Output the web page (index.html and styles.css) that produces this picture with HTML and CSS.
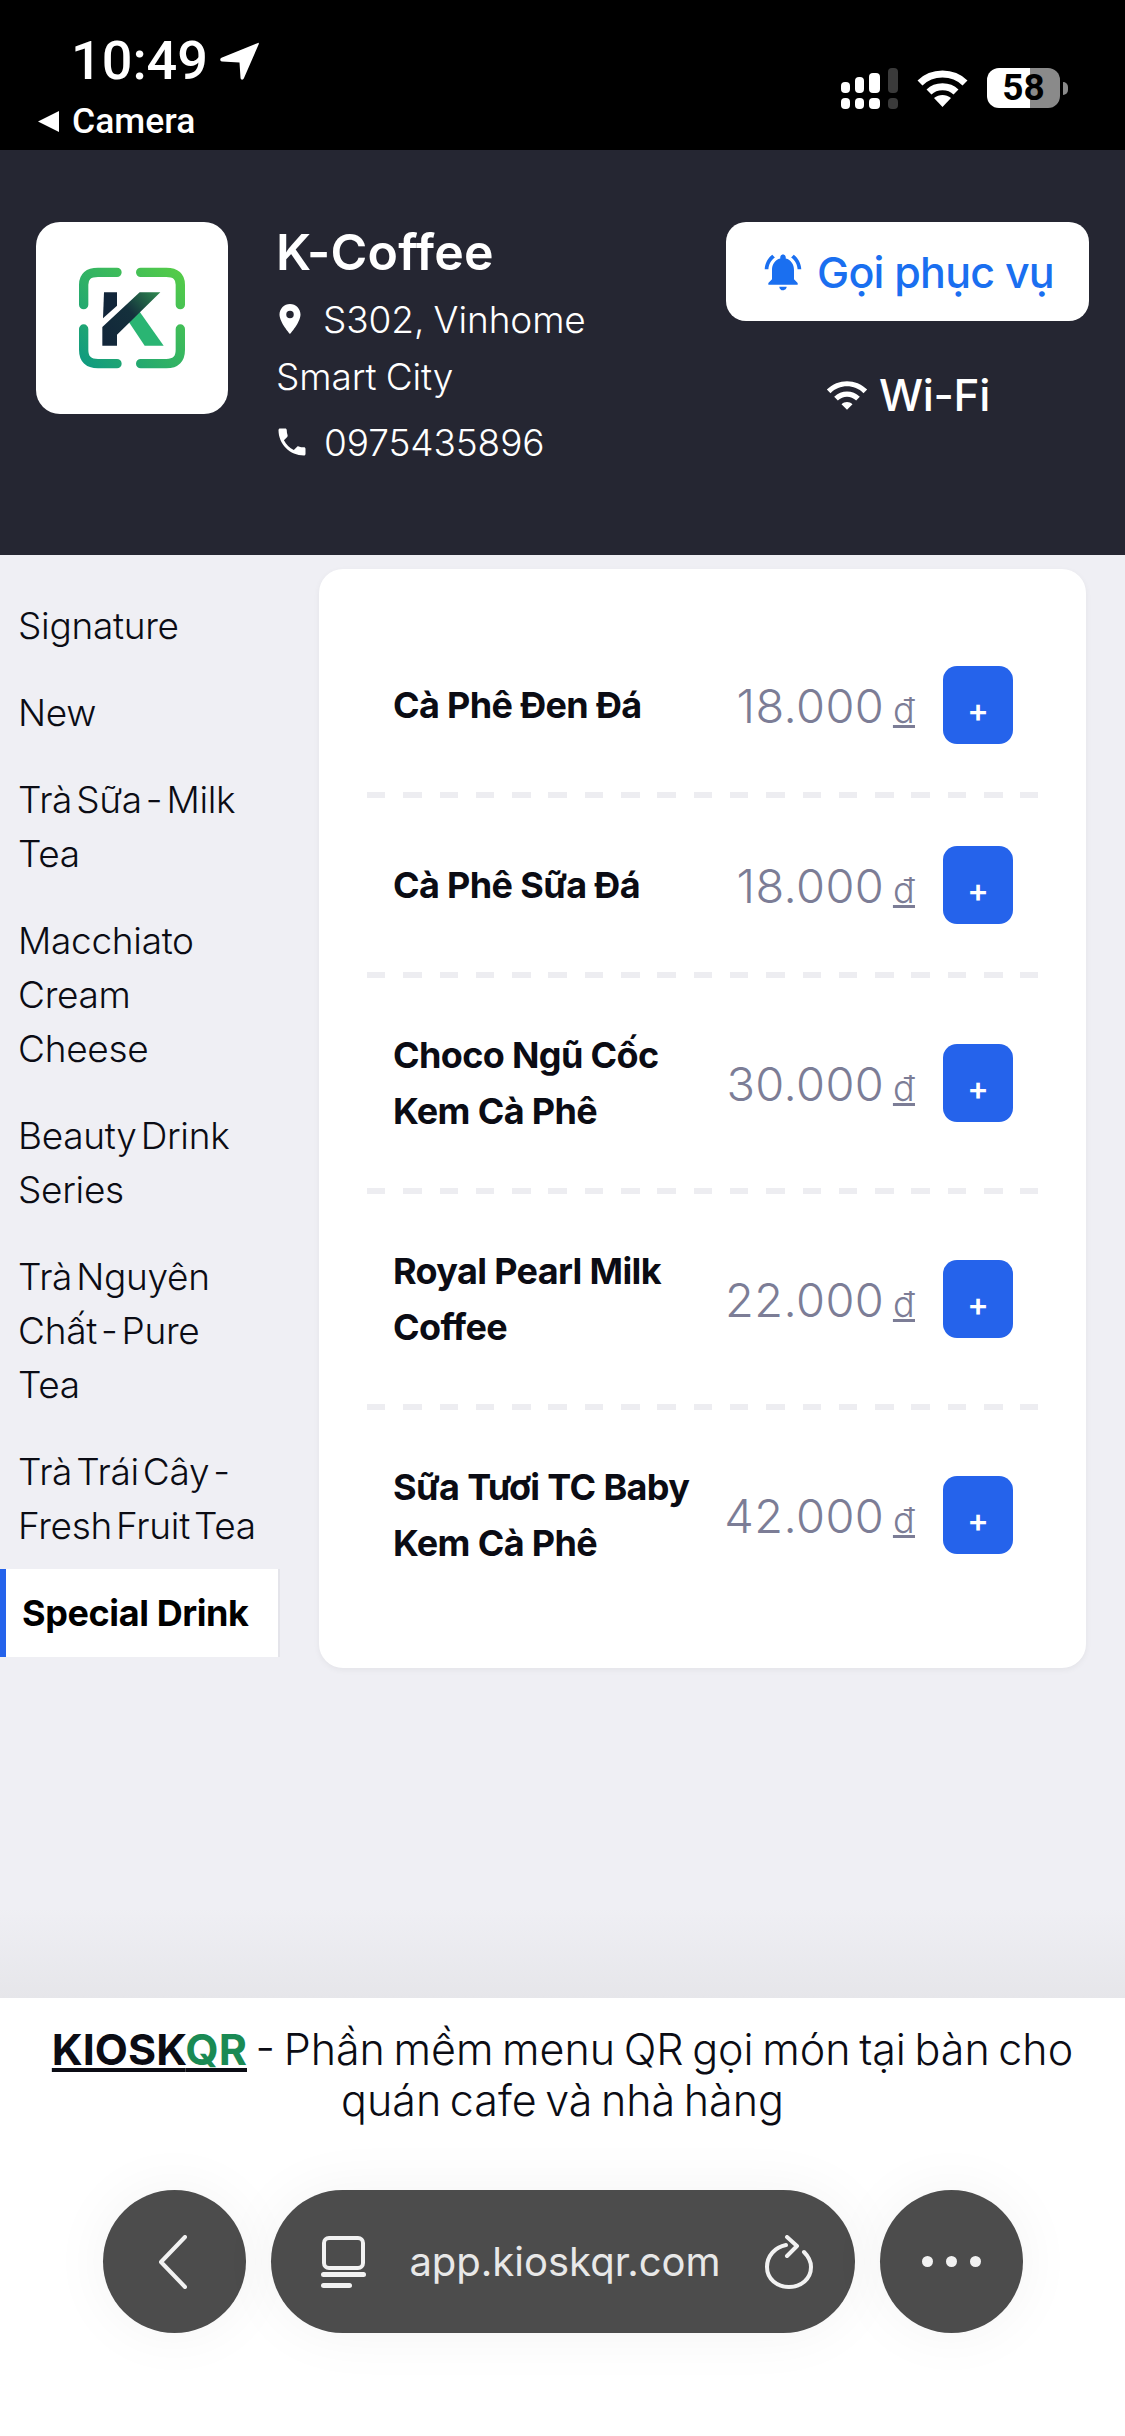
FILE: index.html
```html
<!DOCTYPE html>
<html lang="vi">
<head>
<meta charset="utf-8">
<title>K-Coffee</title>
<link rel="stylesheet" href="styles.css">
</head>
<body>
<div class="page">
  <div class="status">
    <div class="status-left">
      <div class="time-row">
        <span class="time">10:49</span>
        <svg class="loc" viewBox="0 0 39 38"><path d="M38 1 C38.5 .5 39 1 38.8 2 L24 36 C23 38.5 20.5 38 20.5 35.5 L19.5 20.5 L2 19.5 C-.3 19 -.3 16.8 1.5 15.8 Z" fill="#fff"/></svg>
      </div>
      <div class="camera-row">
        <svg class="back-tri" viewBox="0 0 21 21"><path d="M21 0V21L0 10.5Z" fill="#fff"/></svg>
        <span class="camera">Camera</span>
      </div>
    </div>
    <div class="status-right">
      <svg class="signal" viewBox="0 0 58 41">
        <g fill="#fff">
          <rect x="1" y="14" width="9" height="11" rx="4"/><rect x="1" y="30" width="9" height="11" rx="4"/>
          <rect x="15" y="9" width="9" height="16" rx="4"/><rect x="15" y="30" width="9" height="11" rx="4"/>
          <rect x="29" y="5" width="11" height="20" rx="4"/><rect x="29" y="30" width="11" height="11" rx="4"/>
        </g>
        <g fill="#3a3a3a">
          <rect x="48" y="0" width="10" height="25" rx="4"/><rect x="48" y="30" width="10" height="11" rx="4"/>
        </g>
      </svg>
      <svg class="wifi-status" viewBox="0 0 51 37"><g fill="none" stroke="#fff" stroke-width="7"><path d="M3 13C15 1 36 1 48 13"/><path d="M12 22C19 15 32 15 39 22"/></g><path d="M17 28C22 24 29 24 34 28L25.500 37Z" fill="#fff"/></svg>
      <div class="battery"><span class="battery-num">58</span></div>
      <span class="battery-nub"></span>
    </div>
  </div>

  <header class="head">
    <div class="logo-card">
      <svg class="logo" viewBox="-8 10 450 450">
        <defs>
          <linearGradient id="lg" x1="360" y1="90" x2="70" y2="380" gradientUnits="userSpaceOnUse"><stop offset="0" stop-color="#55cc48"/><stop offset="1" stop-color="#0f9a80"/></linearGradient>
          <linearGradient id="kg" x1="300" y1="158" x2="130" y2="318" gradientUnits="userSpaceOnUse"><stop offset="0" stop-color="#2f8a50"/><stop offset=".45" stop-color="#14303c"/><stop offset="1" stop-color="#12263a"/></linearGradient>
        </defs>
        <g fill="none" stroke="url(#lg)" stroke-width="28" stroke-linecap="round">
          <path d="M72 195V135Q72 98 115 98H172"/>
          <path d="M243 98H320Q362 98 362 135V195"/>
          <path d="M72 268V330Q72 372 115 372H172"/>
          <path d="M243 372H320Q362 372 362 330V268"/>
        </g>
        <path d="M208 248L240 216L312 318H255Z" fill="#2ab573"/>
        <path d="M133 158H172V198L130 236Z" fill="#12263a"/>
        <path d="M240 158H302L172 285V318H128V262Z" fill="url(#kg)"/>
      </svg>
    </div>
    <div class="shop">
      <h1 class="shop-name">K-Coffee</h1>
      <p class="shop-line"><svg class="pin" viewBox="0 0 24 24"><path d="M12 2C8.130 2 5 5.130 5 9c0 5.250 7 13 7 13s7-7.750 7-13c0-3.870-3.130-7-7-7zm0 9.500a2.500 2.500 0 0 1 0-5 2.500 2.500 0 0 1 0 5z" fill="#fff"/></svg>S302, Vinhome Smart City</p>
      <p class="shop-line"><svg class="phone" viewBox="0 0 24 24"><path d="M6.620 10.790c1.440 2.830 3.760 5.140 6.590 6.590l2.200-2.200c.27-.27.67-.36 1.020-.24 1.120.37 2.330.57 3.570.57.55 0 1 .45 1 1V20c0 .55-.45 1-1 1-9.390 0-17-7.610-17-17 0-.55.45-1 1-1h3.500c.55 0 1 .45 1 1 0 1.250.2 2.450.57 3.570.11.35.03.74-.25 1.020l-2.200 2.200z" fill="#fff"/></svg>0975435896</p>
    </div>
    <div class="actions">
      <button class="call"><svg class="bell" viewBox="0 0 24 24"><path d="M7.580 4.080 6.150 2.650C3.750 4.480 2.170 7.300 2.030 10.500h2c.15-2.650 1.510-4.970 3.550-6.420zm12.390 6.420h2c-.15-3.200-1.730-6.020-4.120-7.850l-1.420 1.430c2.020 1.450 3.390 3.770 3.540 6.420zM18 11c0-3.070-1.640-5.640-4.500-6.320V4c0-.83-.67-1.500-1.500-1.500s-1.500.67-1.500 1.500v.68C7.630 5.360 6 7.920 6 11v5l-2 2v1h16v-1l-2-2v-5zm-6 11c.14 0 .27-.01.4-.04.65-.14 1.180-.58 1.440-1.180.1-.24.15-.5.15-.78h-4c.01 1.100.9 2 2.010 2z" fill="#1a6ff0"/></svg>Gọi phục vụ</button>
      <div class="wifi"><svg class="wifi-ico" viewBox="0 0 24 24"><path d="M1 9l2 2c4.970-4.970 13.030-4.970 18 0l2-2C16.930 2.930 7.080 2.930 1 9zm8 8l3 3 3-3c-1.650-1.660-4.340-1.660-6 0zm-4-4l2 2c2.760-2.760 7.240-2.760 10 0l2-2C15.140 9.140 8.870 9.140 5 13z" fill="#fff"/></svg>Wi-Fi</div>
    </div>
  </header>

  <main class="main">
    <nav class="side">
      <a class="cat">Signature</a>
      <a class="cat">New</a>
      <a class="cat">Trà Sữa - Milk Tea</a>
      <a class="cat">Macchiato Cream Cheese</a>
      <a class="cat">Beauty Drink Series</a>
      <a class="cat">Trà Nguyên Chất - Pure Tea</a>
      <a class="cat">Trà Trái Cây - Fresh Fruit Tea</a>
      <a class="cat active">Special Drink</a>
    </nav>
    <section class="card">
      <div class="row"><div class="name">Cà Phê Đen Đá</div><div class="price">18.000 <u>đ</u></div><button class="add">+</button></div>
      <div class="divider"></div>
      <div class="row"><div class="name">Cà Phê Sữa Đá</div><div class="price">18.000 <u>đ</u></div><button class="add">+</button></div>
      <div class="divider"></div>
      <div class="row"><div class="name">Choco Ngũ Cốc Kem Cà Phê</div><div class="price">30.000 <u>đ</u></div><button class="add">+</button></div>
      <div class="divider"></div>
      <div class="row"><div class="name">Royal Pearl Milk Coffee</div><div class="price">22.000 <u>đ</u></div><button class="add">+</button></div>
      <div class="divider"></div>
      <div class="row"><div class="name">Sữa Tươi TC Baby Kem Cà Phê</div><div class="price">42.000 <u>đ</u></div><button class="add">+</button></div>
    </section>
  </main>

  <footer class="foot">
    <p class="promo"><a class="brand">KIOSK<span class="qr">QR</span></a> - Phần mềm menu QR gọi món tại bàn cho quán cafe và nhà hàng</p>
    <div class="browser">
      <div class="round"><svg class="chev" viewBox="0 0 29 54"><path d="M27 2L3 27L27 52" fill="none" stroke="#f2f2f2" stroke-width="4" stroke-linecap="round" stroke-linejoin="round"/></svg></div>
      <div class="url">
        <svg class="tabs" viewBox="0 0 45 52"><rect x="3" y="2" width="39" height="30" rx="5" fill="none" stroke="#f2f2f2" stroke-width="4"/><rect x="0" y="36" width="45" height="5" rx="2.500" fill="#f2f2f2"/><rect x="0" y="47" width="31" height="5" rx="2.500" fill="#f2f2f2"/></svg>
        <span class="url-text">app.kioskqr.com</span>
        <svg class="reload" viewBox="0 0 48 54"><path d="M21 10C10 12 2 21 2 32C2 44 12 52 24 52C36 52 46 44 46 32C46 26 43 21 39 17" fill="none" stroke="#f2f2f2" stroke-width="4" stroke-linecap="round"/><path d="M22 2L32 11L22 21" fill="none" stroke="#f2f2f2" stroke-width="4" stroke-linecap="round" stroke-linejoin="round"/></svg>
      </div>
      <div class="round dots"><i></i><i></i><i></i></div>
    </div>
  </footer>
</div>
</body>
</html>
```

FILE: styles.css
```css
* { box-sizing: border-box; }
html, body { margin: 0; padding: 0; }
body { font-family: Inter, "Noto Sans", sans-serif; background: #fff; }
p, h1 { margin: 0; }
button { font-family: inherit; border: 0; }

.page { width: 1125px; height: 2436px; display: flex; flex-direction: column; overflow: hidden; }

/* status bar */
.status { height: 150px; flex: none; background: #000; color: #fff; display: flex; justify-content: space-between; padding: 30px 57px 0 38px; }
.status-left { display: flex; flex-direction: column; }
.time-row { display: flex; align-items: center; padding-left: 33px; height: 62px; }
.time { font-family: Roboto, sans-serif; font-weight: 500; font-size: 54px; line-height: 62px; }
.loc { width: 39px; height: 38px; margin-left: 12px; }
.camera-row { display: flex; align-items: center; height: 40px; margin-top: 9px; }
.back-tri { width: 21px; height: 21px; }
.camera { font-family: Roboto, sans-serif; font-weight: 500; font-size: 35.500px; margin-left: 13px; }
.status-right { display: flex; align-items: flex-start; padding-top: 38px; }
.signal { width: 58px; height: 41px; }
.wifi-status { width: 51px; height: 37px; margin: 2px 19px 0; }
.battery { width: 73px; height: 40px; border-radius: 12px; background: linear-gradient(to right, #fff 59%, #8a8a8a 59%); color: #000; display: flex; align-items: center; justify-content: center; }
.battery-num { font-family: Roboto, sans-serif; font-weight: 700; font-size: 37px; line-height: 40px; }
.battery-nub { width: 5px; height: 13px; margin: 14px 0 0 3px; background: #8a8a8a; border-radius: 0 6px 6px 0; }

/* header */
.head { height: 405px; flex: none; background: #252632; color: #fff; display: flex; padding: 72px 36px 0; }
.logo-card { width: 192px; height: 192px; flex: none; background: #fff; border-radius: 24px; display: flex; align-items: center; justify-content: center; }
.logo { width: 150px; height: 150px; }
.shop { width: 320px; margin-left: 48px; }
.shop-name { font-size: 50px; font-weight: 600; line-height: 60px; letter-spacing: .2px; margin-bottom: 9px; }
.shop-line { font-size: 37px; font-weight: 300; line-height: 57px; margin-bottom: 9px; word-spacing: -1px; letter-spacing: -.1px; }
.pin { width: 36px; height: 36px; margin: 0 15px -4px -4px; }
.phone { width: 36px; height: 36px; margin: 0 14px -4px -2px; }
.actions { margin-left: auto; width: 363px; display: flex; flex-direction: column; align-items: center; }
.call { width: 363px; height: 99px; background: #fff; border-radius: 20px; color: #1a6ff0; font-size: 43px; font-weight: 500; letter-spacing: -.8px; display: flex; align-items: center; justify-content: center; }
.bell { width: 44px; height: 44px; margin-right: 12px; }
.wifi { display: flex; align-items: center; font-size: 44px; font-weight: 500; line-height: 60px; margin-top: 44px; letter-spacing: -.3px; }
.wifi-ico { width: 44px; height: 44px; margin-right: 10px; }

/* main */
.main { flex: 1; display: flex; align-items: flex-start; background: linear-gradient(to bottom, #efeff4 calc(100% - 90px), #e6e6ea 100%); }
.side { width: 280px; flex: none; padding-top: 27px; display: flex; flex-direction: column; }
.cat { display: block; font-size: 37px; font-weight: 300; line-height: 54px; letter-spacing: -.3px; word-spacing: -6px; color: #0b0c14; padding: 16.500px 20px 16.500px 18px; }
.cat.active { background: #fff; font-size: 36px; font-weight: 700; color: #000; padding: 17px 0 17px 16px; border-left: 6px solid #2563eb; border-right: 2px solid #e4e4ea; letter-spacing: -.4px; word-spacing: 0; white-space: nowrap; }
.card { width: 767px; margin: 14px 0 0 39px; background: #fff; border-radius: 24px; padding: 49px 48px 48px; box-shadow: 0 2px 6px rgba(0, 0, 0, .05); }
.row { display: flex; align-items: center; padding: 48px 25px 48px 26px; }
.name { flex: 1; font-size: 36px; font-weight: 700; line-height: 56px; letter-spacing: -.65px; padding: 1px 0; color: #0b0c14; }
.price { flex: none; font-size: 47px; font-weight: 300; letter-spacing: .4px; word-spacing: -5px; color: #7c7d96; white-space: nowrap; margin: 0 28px 0 10px; }
.price u { font-size: 36px; }
.add { flex: none; width: 70px; height: 78px; background: #2563eb; color: #fff; border-radius: 14px; font-size: 32px; font-weight: 600; padding: 10px 0 0; }
.divider { height: 6px; background: repeating-linear-gradient(to right, #ededf1 0, #ededf1 18.500px, transparent 18.500px, transparent 36.300px); }

/* footer */
.foot { height: 438px; flex: none; background: #fff; padding-top: 26px; }
.promo { font-size: 43px; font-weight: 300; line-height: 51px; word-spacing: -3.500px; text-align: center; color: #0b0c14; padding: 0 40px; }
.brand { font-weight: 700; text-decoration: underline; }
.qr { color: #1a8a54; }
.browser { display: flex; justify-content: center; gap: 25px; margin-top: 64px; }
.round { width: 143px; height: 143px; border-radius: 50%; background: #4c4c4c; display: flex; align-items: center; justify-content: center; box-shadow: 0 0 60px rgba(0, 0, 0, .05); }
.chev { width: 29px; height: 54px; margin-left: -4px; }
.dots { gap: 13px; }
.dots i { width: 11px; height: 11px; border-radius: 50%; background: #f2f2f2; }
.url { width: 584px; height: 143px; border-radius: 72px; background: #4c4c4c; display: flex; align-items: center; padding: 0 42px 0 50px; box-shadow: 0 0 60px rgba(0, 0, 0, .05); }
.tabs { width: 45px; height: 52px; flex: none; }
.url-text { flex: 1; text-align: center; font-size: 40px; color: #e8e8e8; }
.reload { width: 48px; height: 54px; flex: none; }
```
